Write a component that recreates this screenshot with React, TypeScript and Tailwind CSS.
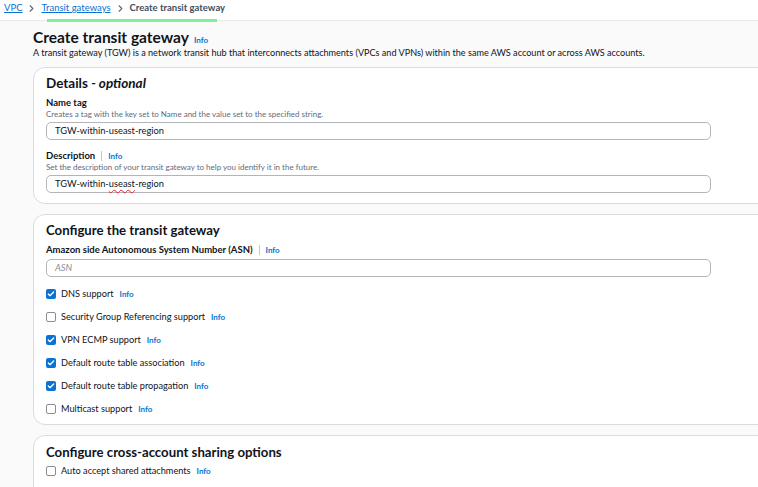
import { Check, ChevronRight } from 'lucide-react';

const font = { fontFamily: 'Lato, "Open Sans", Arial, sans-serif' };

function Info({ className = '' }: { className?: string }) {
    return <span className={`text-[8px] font-bold text-[#0972d3] ${className}`}>Info</span>;
}

function Checkbox({ label, checked, h = 'h-[23px]' }: { label: string; checked: boolean; h?: string }) {
    return (
        <div className={`flex items-center ${h}`}>
            {checked ? (
                <div className="w-[10px] h-[10px] rounded-[2px] bg-[#0972d3] flex items-center justify-center">
                    <Check className="w-[8px] h-[8px] text-white" strokeWidth={4} />
                </div>
            ) : (
                <div className="w-[10px] h-[10px] rounded-[2px] border border-[#8c8c94] bg-white" />
            )}
            <span className="ml-[5px] text-[9.2px] text-[#0f141a]">{label}</span>
            <Info className="ml-[6px]" />
        </div>
    );
}

function Card({ children, className = '' }: { children: React.ReactNode; className?: string }) {
    return (
        <div className={`bg-white border border-[#dcdcdc] rounded-[12px] -mr-[20px] pl-[12px] ${className}`}>
            {children}
        </div>
    );
}

function TextInput({ children, placeholder }: { children?: React.ReactNode; placeholder?: string }) {
    return (
        <div className="w-[665px] h-[18px] border border-[#b4b4bb] rounded-[5px] flex items-center px-[8px]">
            {children ? (
                <span className="text-[9.3px] text-[#0f141a]">{children}</span>
            ) : (
                <span className="text-[9.3px] italic text-[#8c8c94]">{placeholder}</span>
            )}
        </div>
    );
}

export default function App() {
    return (
        <div className="w-[758px] h-[487px] overflow-hidden bg-[#fafafa]" style={font}>
            <div className="h-[21px] bg-white border-b border-[#e9e9e9] flex items-center pl-[4px] pb-[4px] text-[9.5px] relative">
                <span className="text-[#0972d3] underline">VPC</span>
                <ChevronRight className="mx-[4px] w-[11px] h-[11px] text-[#5f6b7a]" strokeWidth={2.5} />
                <span className="text-[#0972d3] underline">Transit gateways</span>
                <ChevronRight className="mx-[4px] w-[11px] h-[11px] text-[#5f6b7a]" strokeWidth={2.5} />
                <span className="text-[#414d5c] font-bold">Create transit gateway</span>
                <div className="absolute left-[47px] top-[19px] w-[170px] h-[3px] bg-[#7ff09a]" />
            </div>

            <div className="pl-[33px] pt-[8px]">
                <div className="flex items-baseline h-[16px]">
                    <h1 className="text-[15.5px] font-bold text-[#0f141a] leading-[16px]">Create transit gateway</h1>
                    <Info className="ml-[5px]" />
                </div>
                <p className="text-[9.1px] text-[#0f141a] leading-[12px] mt-[2px]">
                    A transit gateway (TGW) is a network transit hub that interconnects attachments (VPCs and VPNs) within the same AWS account or across AWS accounts.
                </p>

                <Card className="mt-[8px] pt-[6px] pb-[10px]">
                    <h2 className="text-[13.5px] font-bold text-[#0f141a] leading-[18px]">
                        Details <span className="italic">- optional</span>
                    </h2>
                    <div className="mt-[5px] text-[9.5px] font-bold text-[#0f141a] leading-[12px]">Name tag</div>
                    <div className="text-[8px] text-[#5f6b7a] leading-[10px]">Creates a tag with the key set to Name and the value set to the specified string.</div>
                    <div className="mt-[3px]">
                        <TextInput>TGW-within-useast-region</TextInput>
                    </div>
                    <div className="mt-[10px] flex items-center leading-[12px]">
                        <span className="text-[9.5px] font-bold text-[#0f141a]">Description</span>
                        <span className="mx-[6px] w-px h-[10px] bg-[#c6c6cd]" />
                        <Info />
                    </div>
                    <div className="text-[8px] text-[#5f6b7a] leading-[10px]">Set the description of your transit gateway to help you identify it in the future.</div>
                    <div className="mt-[3px]">
                        <TextInput>
                            TGW-within-<span className="underline decoration-wavy decoration-[#e02020] decoration-[0.5px] underline-offset-[2px]">useast</span>-region
                        </TextInput>
                    </div>
                </Card>

                <Card className="mt-[10px] pt-[6px] pb-[4px]">
                    <h2 className="text-[13.2px] font-bold text-[#0f141a] leading-[18px]">Configure the transit gateway</h2>
                    <div className="mt-[5px] flex items-center leading-[12px]">
                        <span className="text-[9.5px] font-bold text-[#0f141a]">Amazon side Autonomous System Number (ASN)</span>
                        <span className="mx-[6px] w-px h-[10px] bg-[#c6c6cd]" />
                        <Info />
                    </div>
                    <div className="mt-[3px] mb-[5px]">
                        <TextInput placeholder="ASN" />
                    </div>
                    <Checkbox label="DNS support" checked />
                    <Checkbox label="Security Group Referencing support" checked={false} />
                    <Checkbox label="VPN ECMP support" checked />
                    <Checkbox label="Default route table association" checked />
                    <Checkbox label="Default route table propagation" checked />
                    <Checkbox label="Multicast support" checked={false} />
                </Card>

                <Card className="mt-[10px] pt-[7px] pb-[20px]">
                    <h2 className="text-[13.2px] font-bold text-[#0f141a] leading-[18px]">Configure cross-account sharing options</h2>
                    <Checkbox label="Auto accept shared attachments" checked={false} h="h-[20px]" />
                </Card>
            </div>
        </div>
    );
}
